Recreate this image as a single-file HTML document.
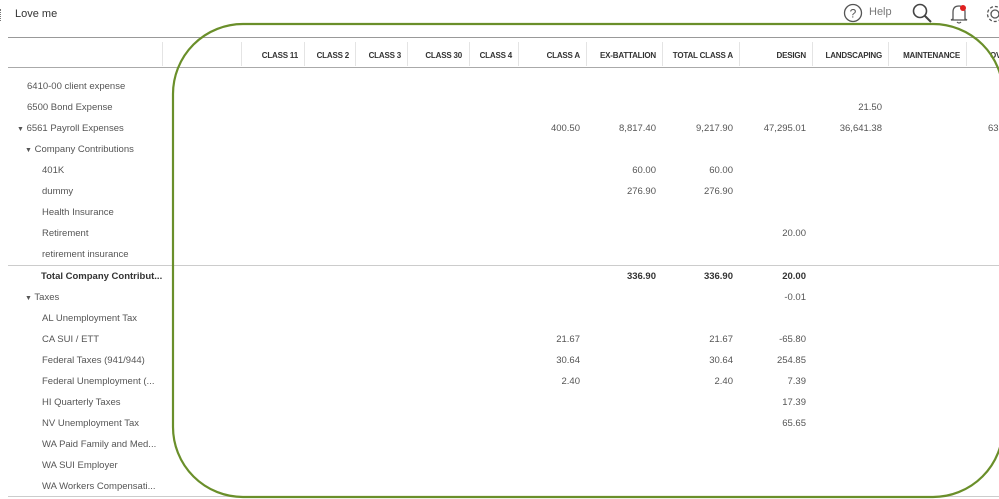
<!DOCTYPE html>
<html><head><meta charset="utf-8"><style>
body{margin:0;width:999px;height:499px;overflow:hidden;background:#fff;font-family:"Liberation Sans",sans-serif;position:relative}
.a{position:absolute;white-space:nowrap}
.t{font-size:9.5px;color:#555}
.h{font-size:8px;font-weight:bold;color:#333;top:51px;letter-spacing:-0.2px;text-align:right}
.n{font-size:9.5px;color:#555;text-align:right}
.div{position:absolute;top:42px;height:24px;width:1px;background:#e4e4e4}
</style></head><body>
<div class="a" style="left:0;top:9px;width:2px;height:12px;border-left:1px dotted #777"></div>
<div class="a" style="left:15px;top:8px;font-size:11px;color:#333">Love me</div>
<svg class="a" style="left:843px;top:3px" width="20" height="20"><circle cx="10" cy="10" r="8.5" fill="none" stroke="#555" stroke-width="1.3"/><text x="10" y="14.5" font-size="12" text-anchor="middle" fill="#555" font-family="Liberation Sans">?</text></svg>
<div class="a" style="left:869px;top:6px;font-size:11px;color:#777">Help</div>
<svg class="a" style="left:911px;top:2px" width="22" height="22"><circle cx="9" cy="9" r="6.5" fill="none" stroke="#444" stroke-width="1.6"/><line x1="13.5" y1="13.5" x2="20" y2="20" stroke="#444" stroke-width="2"/></svg>
<svg class="a" style="left:949px;top:3px" width="20" height="22"><path d="M4 16 L4 9 Q4 3 10 3 Q16 3 16 9 L16 16 L18 17 L2 17 Z" fill="none" stroke="#555" stroke-width="1.3"/><path d="M8 19 Q10 21 12 19" fill="none" stroke="#555" stroke-width="1.2"/><circle cx="14" cy="5" r="3" fill="#e02020"/></svg>
<svg class="a" style="left:985px;top:4px" width="20" height="20"><circle cx="10" cy="10" r="4" fill="none" stroke="#555" stroke-width="1.3"/><circle cx="10" cy="10" r="7.5" fill="none" stroke="#555" stroke-width="1.3" stroke-dasharray="3 2"/></svg>

<div class="a" style="left:8px;top:37px;width:991px;height:1px;background:#999"></div>
<div class="a" style="left:8px;top:67px;width:991px;height:1px;background:#aaa"></div>
<div class="div" style="left:162px"></div><div class="div" style="left:241px"></div><div class="div" style="left:304px"></div><div class="div" style="left:355px"></div><div class="div" style="left:407px"></div><div class="div" style="left:469px"></div><div class="div" style="left:518px"></div><div class="div" style="left:586px"></div><div class="div" style="left:662px"></div><div class="div" style="left:739px"></div><div class="div" style="left:812px"></div><div class="div" style="left:888px"></div><div class="div" style="left:966px"></div>
<div class="a h" style="right:701px">CLASS 11</div>
<div class="a h" style="right:650px">CLASS 2</div>
<div class="a h" style="right:598px">CLASS 3</div>
<div class="a h" style="right:537px">CLASS 30</div>
<div class="a h" style="right:487px">CLASS 4</div>
<div class="a h" style="right:419px">CLASS A</div>
<div class="a h" style="right:343px">EX-BATTALION</div>
<div class="a h" style="right:266px">TOTAL CLASS A</div>
<div class="a h" style="right:193px">DESIGN</div>
<div class="a h" style="right:117px">LANDSCAPING</div>
<div class="a h" style="right:39px">MAINTENANCE</div>
<div class="a h" style="left:990px;text-align:left">OV</div>

<div class="a t" style="left:27px;top:81px">6410-00 client expense</div>
<div class="a t" style="left:27px;top:102px">6500 Bond Expense</div>
<div class="a t" style="left:17px;top:123px"><span style="font-size:7px">▼</span> 6561 Payroll Expenses</div>
<div class="a t" style="left:25px;top:144px"><span style="font-size:7px">▼</span> Company Contributions</div>
<div class="a t" style="left:42px;top:165px">401K</div>
<div class="a t" style="left:42px;top:186px">dummy</div>
<div class="a t" style="left:42px;top:207px">Health Insurance</div>
<div class="a t" style="left:42px;top:228px">Retirement</div>
<div class="a t" style="left:42px;top:249px">retirement insurance</div>
<div class="a" style="left:8px;top:265px;width:991px;height:1px;background:#ccc"></div>
<div class="a t" style="left:41px;top:271px;font-weight:bold;color:#333">Total Company Contribut...</div>
<div class="a t" style="left:25px;top:292px"><span style="font-size:7px">▼</span> Taxes</div>
<div class="a t" style="left:42px;top:313px">AL Unemployment Tax</div>
<div class="a t" style="left:42px;top:334px">CA SUI / ETT</div>
<div class="a t" style="left:42px;top:355px">Federal Taxes (941/944)</div>
<div class="a t" style="left:42px;top:376px">Federal Unemployment (...</div>
<div class="a t" style="left:42px;top:397px">HI Quarterly Taxes</div>
<div class="a t" style="left:42px;top:418px">NV Unemployment Tax</div>
<div class="a t" style="left:42px;top:439px">WA Paid Family and Med...</div>
<div class="a t" style="left:42px;top:460px">WA SUI Employer</div>
<div class="a t" style="left:42px;top:481px">WA Workers Compensati...</div>
<div class="a" style="left:8px;top:496px;width:991px;height:1px;background:#ccc"></div>

<div class="a n" style="right:117px;top:102px">21.50</div>
<div class="a n" style="right:419px;top:123px">400.50</div>
<div class="a n" style="right:343px;top:123px">8,817.40</div>
<div class="a n" style="right:266px;top:123px">9,217.90</div>
<div class="a n" style="right:193px;top:123px">47,295.01</div>
<div class="a n" style="right:117px;top:123px">36,641.38</div>
<div class="a n" style="left:988px;top:123px">63</div>
<div class="a n" style="right:343px;top:165px">60.00</div>
<div class="a n" style="right:266px;top:165px">60.00</div>
<div class="a n" style="right:343px;top:186px">276.90</div>
<div class="a n" style="right:266px;top:186px">276.90</div>
<div class="a n" style="right:193px;top:228px">20.00</div>
<div class="a n" style="right:343px;top:271px;font-weight:bold;color:#333">336.90</div>
<div class="a n" style="right:266px;top:271px;font-weight:bold;color:#333">336.90</div>
<div class="a n" style="right:193px;top:271px;font-weight:bold;color:#333">20.00</div>
<div class="a n" style="right:193px;top:292px">-0.01</div>
<div class="a n" style="right:419px;top:334px">21.67</div>
<div class="a n" style="right:266px;top:334px">21.67</div>
<div class="a n" style="right:193px;top:334px">-65.80</div>
<div class="a n" style="right:419px;top:355px">30.64</div>
<div class="a n" style="right:266px;top:355px">30.64</div>
<div class="a n" style="right:193px;top:355px">254.85</div>
<div class="a n" style="right:419px;top:376px">2.40</div>
<div class="a n" style="right:266px;top:376px">2.40</div>
<div class="a n" style="right:193px;top:376px">7.39</div>
<div class="a n" style="right:193px;top:397px">17.39</div>
<div class="a n" style="right:193px;top:418px">65.65</div>

<svg class="a" style="left:0;top:0" width="999" height="499"><rect x="173" y="24" width="830" height="473" rx="70" ry="70" fill="none" stroke="#6a8f2a" stroke-width="2.2"/></svg>
</body></html>
